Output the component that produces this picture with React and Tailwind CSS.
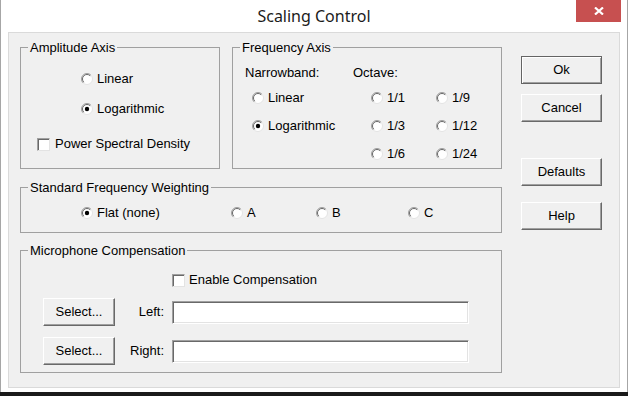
import React from "react";

const Radio = ({ checked }) => (
  <svg width="12" height="12" viewBox="0 0 12 12" className="shrink-0">
    <circle cx="6" cy="6" r="5.5" fill="#fff" stroke="#e3e3e3" />
    <path d="M2.1 9.9 A5.5 5.5 0 0 1 9.9 2.1" fill="none" stroke="#a0a0a0" />
    <path d="M2.8 9.2 A4.5 4.5 0 0 1 9.2 2.8" fill="none" stroke="#696969" />
    {checked && <circle cx="6" cy="6" r="2.2" fill="#000" />}
  </svg>
);

const Checkbox = () => (
  <div className="w-[13px] h-[13px] shrink-0 bg-white border border-t-[#a0a0a0] border-l-[#a0a0a0] border-r-[#e3e3e3] border-b-[#e3e3e3] shadow-[inset_1px_1px_0_#696969]"></div>
);

const RadioRow = ({ label, checked, className = "" }) => (
  <div className={`h-[16px] flex items-center gap-[4px] ${className}`}>
    <Radio checked={checked} />
    <span>{label}</span>
  </div>
);

const Btn = ({ children, isDefault, className = "" }) => (
  <div
    className={`h-[28px] flex items-center justify-center bg-[#f0f0f0] border ${
      isDefault
        ? "border-[#646464] shadow-[inset_1px_1px_0_#fff,inset_-1px_-1px_0_#a0a0a0]"
        : "border-t-white border-l-white border-r-[#696969] border-b-[#696969] shadow-[inset_-1px_-1px_0_#a0a0a0]"
    } ${className}`}
  >
    {children}
  </div>
);

const Group = ({ title, className = "", children }) => (
  <fieldset className={`border border-[#a0a0a0] p-0 m-0 min-w-0 ${className}`}>
    <legend className="ml-[7px] px-[2px] leading-[15px]">{title}</legend>
    {children}
  </fieldset>
);

const Field = () => (
  <div className="w-[297px] h-[23px] bg-white border border-t-[#a0a0a0] border-l-[#a0a0a0] border-r-white border-b-white shadow-[inset_1px_1px_0_#696969,inset_-1px_-1px_0_#e3e3e3]"></div>
);

export default function App() {
  return (
    <div className="w-[628px] h-[396px] bg-[#1a1a1a] flex flex-col font-['Liberation_Sans',Arial,sans-serif] text-[13px] text-black">
      <div className="h-[392px] bg-white border-x border-[#a6a6a6] relative flex flex-col">
        {/* title bar */}
        <div className="h-[32px] flex items-center justify-center pb-[1px]">
          <span className="font-['Noto_Sans',sans-serif] text-[16px] text-[#1b1b1b]">
            Scaling Control
          </span>
        </div>
        <div className="absolute top-0 right-[6px] w-[45px] h-[22px] bg-[#c75050] flex items-center justify-center">
          <svg width="10" height="8" viewBox="0 0 10 8">
            <path d="M1 0.5 L9 7.5 M9 0.5 L1 7.5" stroke="#fff" strokeWidth="2.2" />
          </svg>
        </div>

        {/* client area */}
        <div className="ml-[7px] w-[612px] h-[356px] border border-[#dadada] bg-[#f0f0f0] flex">
          <div className="pl-[11px] pt-[7px] w-[493px] flex flex-col">
            <div className="flex gap-[12px]">
              <Group title="Amplitude Axis" className="w-[200px] h-[129px]">
                <div className="flex flex-col pt-[16px]">
                  <RadioRow label="Linear" className="ml-[60px]" />
                  <RadioRow label="Logarithmic" checked className="ml-[60px] mt-[14px]" />
                  <div className="h-[16px] flex items-center gap-[5px] ml-[16px] mt-[19px]">
                    <Checkbox />
                    <span>Power Spectral Density</span>
                  </div>
                </div>
              </Group>
              <Group title="Frequency Axis" className="w-[270px] h-[129px]">
                <div className="flex flex-col pt-[10px]">
                  <div className="h-[16px] flex items-center pl-[12px]">
                    <span className="w-[108px]">Narrowband:</span>
                    <span>Octave:</span>
                  </div>
                  <div className="grid grid-cols-[119px_65px_auto] gap-y-[12px] pl-[19px] mt-[9px]">
                    <RadioRow label="Linear" />
                    <RadioRow label="1/1" />
                    <RadioRow label="1/9" />
                    <RadioRow label="Logarithmic" checked />
                    <RadioRow label="1/3" />
                    <RadioRow label="1/12" />
                    <div></div>
                    <RadioRow label="1/6" />
                    <RadioRow label="1/24" />
                  </div>
                </div>
              </Group>
            </div>

            <Group title="Standard Frequency Weighting" className="w-[482px] h-[53px] mt-[11px]">
              <div className="flex pt-[10px] pl-[60px]">
                <RadioRow label="Flat (none)" checked className="w-[150px]" />
                <RadioRow label="A" className="w-[85px]" />
                <RadioRow label="B" className="w-[92px]" />
                <RadioRow label="C" />
              </div>
            </Group>

            <Group title="Microphone Compensation" className="w-[482px] h-[130px] mt-[10px]">
              <div className="flex flex-col pt-[14px]">
                <div className="h-[16px] flex items-center gap-[4px] pl-[151px]">
                  <Checkbox />
                  <span>Enable Compensation</span>
                </div>
                <div className="flex items-center pl-[22px] mt-[10px]">
                  <Btn className="w-[72px] h-[27px]">Select...</Btn>
                  <span className="w-[49px] text-right">Left:</span>
                  <div className="ml-[8px]">
                    <Field />
                  </div>
                </div>
                <div className="flex items-center pl-[22px] mt-[11px]">
                  <Btn className="w-[72px] h-[27px]">Select...</Btn>
                  <span className="w-[49px] text-right">Right:</span>
                  <div className="ml-[8px]">
                    <Field />
                  </div>
                </div>
              </div>
            </Group>
          </div>

          {/* buttons */}
          <div className="pl-[19px] pt-[23px] flex flex-col">
            <Btn isDefault className="w-[81px]">Ok</Btn>
            <Btn className="w-[81px] mt-[10px]">Cancel</Btn>
            <Btn className="w-[81px] mt-[36px]">Defaults</Btn>
            <Btn className="w-[81px] mt-[16px]">Help</Btn>
          </div>
        </div>
      </div>
    </div>
  );
}
